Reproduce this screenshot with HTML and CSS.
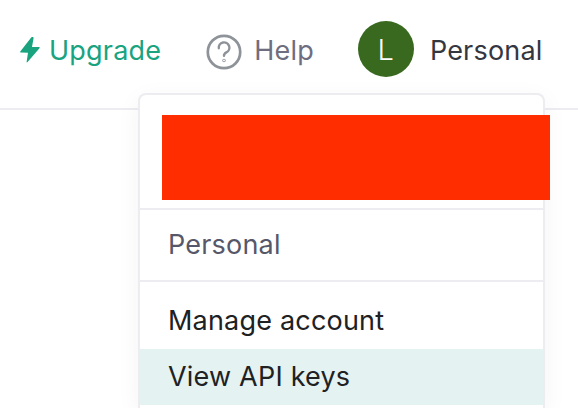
FILE: index.html
```html
<!DOCTYPE html>
<html lang="en">
  <head>
    <meta charset="UTF-8" />
    <title>Account menu</title>
    <link rel="stylesheet" href="styles.css">
  </head>
  <body>
    <header class="topbar">
      <a class="nav-item upgrade">
        <svg class="bolt" width="20" height="26" viewBox="0 0 20 26"><path d="M11.4 0.3 L0.3 14.6 Q-0.1 15.6 1 15.6 L8 15.8 L6.6 25 Q6.8 25.9 7.6 25 L19.7 10.9 Q20.1 10 19 10 L12 10 L13.6 1 Q13.2 -0.8 11.4 0.3 Z" fill="#19a37f"/></svg>
        Upgrade
      </a>
      <a class="nav-item help">
        <svg class="help-icon" width="36" height="36" viewBox="0 0 36 36" fill="none" stroke="#8e9299" stroke-width="2.7" stroke-linecap="round"><circle cx="18" cy="18" r="16.2"/><path d="M12.8 14.2 A5.3 5.3 0 1 1 20.4 18.4 Q18 19.6 18 21.8" stroke-width="2.4"/><circle cx="18" cy="26.4" r="0.4"/></svg>
        Help
      </a>
      <a class="nav-item account">
        <span class="avatar">L</span>
        Personal
      </a>
    </header>
    <div class="menu">
      <div class="menu-top"><div class="redacted"></div></div>
      <div class="menu-org">Personal</div>
      <ul class="menu-list">
        <li>Manage account</li>
        <li class="active">View API keys</li>
      </ul>
    </div>
  </body>
</html>
```

FILE: styles.css
```css
html, body {
  height: 100%;
}

body {
  margin: 0;
  background-color: #fff;
  color: #202123;
  font-family: Inter, "Noto Sans", sans-serif;
  font-size: 27px;
  letter-spacing: 0.2px;
  overflow: hidden;
  position: relative;
}

.topbar {
  display: flex;
  align-items: center;
  height: 100px;
  padding: 0 0 8px 20px;
  border-bottom: 2px solid #ececf1;
}

.nav-item {
  display: flex;
  align-items: center;
}

.upgrade {
  gap: 9px;
  color: #19a37f;
}

.help {
  gap: 12px;
  margin-left: 45px;
  color: #6e6e80;
}

.help-icon {
  margin-top: 3px;
}

.account {
  gap: 16px;
  margin-left: 44px;
  color: #353740;
}

.avatar {
  display: flex;
  align-items: center;
  justify-content: center;
  width: 56px;
  height: 56px;
  margin-top: -2px;
  border-radius: 50%;
  background-color: #38691f;
  color: #fff;
  font-size: 29px;
  font-weight: 300;
}

/* dropdown lies over the page */
.menu {
  position: absolute;
  top: 93px;
  bottom: 0;
  left: 138px;
  width: 403px;
  background-color: #fff;
  border: 2px solid #ececf1;
  border-bottom: none;
  border-radius: 8px 8px 0 0;
  box-shadow: 0 6px 24px rgba(0, 0, 0, 0.05);
}

.menu-top {
  padding: 20px 0 8px 22px;
  border-bottom: 2px solid #ececf1;
}

.redacted {
  width: 388px;
  height: 85px;
  background-color: #ff2d00;
}

.menu-org {
  padding: 19px 28px 19px;
  line-height: 32px;
  color: #565869;
  border-bottom: 2px solid #ececf1;
}

.menu-list {
  list-style: none;
  margin: 0;
  padding: 11px 0 0;
}

.menu-list li {
  padding: 0 28px;
  line-height: 56px;
}

.menu-list .active {
  background-color: #e5f2f2;
}
```
